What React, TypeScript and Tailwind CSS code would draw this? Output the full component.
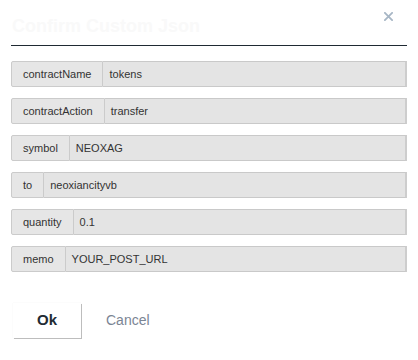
import React from "react";

const rows: [string, string][] = [
  ["contractName", "tokens"],
  ["contractAction", "transfer"],
  ["symbol", "NEOXAG"],
  ["to", "neoxiancityvb"],
  ["quantity", "0.1"],
  ["memo", "YOUR_POST_URL"],
];

export default function App() {
  return (
    <div
      className="w-[418px] h-[360px] bg-white relative"
      style={{ fontFamily: '"Liberation Sans", Arial, sans-serif' }}
    >
      <div className="px-[11px] pt-[8px]">
        <div className="flex items-start justify-between h-[38px] border-b-[1.5px] border-[#1f2a33]">
          <div className="text-[18px] font-bold text-[#f9f9f9] pl-[1px] pt-[6px] leading-[24px]">
            Confirm Custom Json
          </div>
          <svg width="9" height="9" viewBox="0 0 10 10" className="mt-[4px] mr-[14px]">
            <path d="M1 1 L9 9 M9 1 L1 9" stroke="#a7b6c5" strokeWidth="2" strokeLinecap="square" />
          </svg>
        </div>
        <div className="flex flex-col gap-[11px] mt-[15px]">
          {rows.map(([k, v]) => (
            <div key={k} className="flex h-[26px] text-[11px] text-[#333]">
              <div className="flex items-center px-[11px] bg-[#e6e6e6] border border-[#cbcbcb] rounded-l-[2px]">
                {k}
              </div>
              <div className="flex-1 flex items-center pl-[6px] bg-[#e4e4e4] border border-l-0 border-[#c9c9c9] border-r-2 border-r-[#cdcdcd]">
                {v}
              </div>
            </div>
          ))}
        </div>
        <div className="flex items-center mt-[31px] pl-[2px]">
          <button className="w-[68px] h-[35px] bg-white text-[15px] font-bold text-[#222b33] shadow-[1px_1px_0_#bdbdbd,0_0_1px_#eee] border-0">
            Ok
          </button>
          <button className="ml-[25px] text-[14px] text-[#7b8594]">Cancel</button>
        </div>
      </div>
    </div>
  );
}
